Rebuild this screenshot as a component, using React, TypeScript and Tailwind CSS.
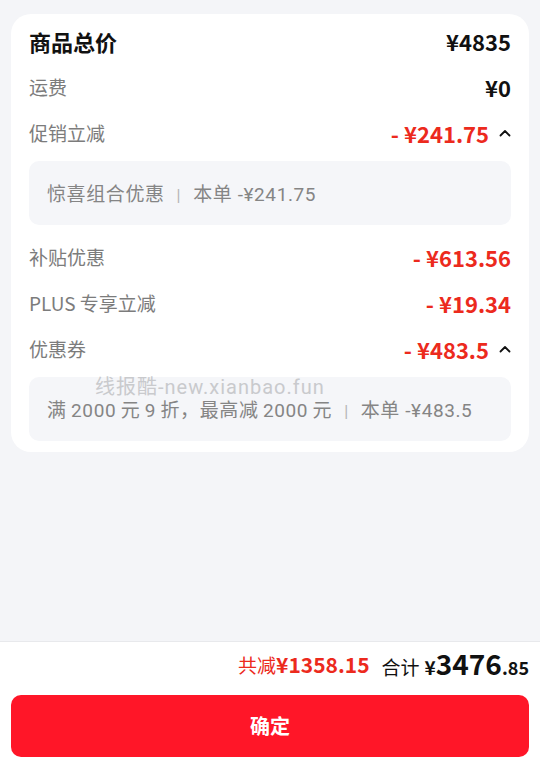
import React from 'react';

const font = { fontFamily: '"Noto Sans CJK SC", "Noto Sans", sans-serif' };
const detailFont = { fontFamily: 'Roboto, "Noto Sans CJK SC", sans-serif' };

function Chevron() {
  return (
    <svg width="12" height="8" viewBox="0 0 12 8" className="ml-[10px]">
      <polyline points="1.5,6.5 6,2 10.5,6.5" fill="none" stroke="#111" strokeWidth="1.8" strokeLinecap="round" strokeLinejoin="round" />
    </svg>
  );
}

function Row({ label, value, red, open }: { label: string; value: string; red?: boolean; open?: boolean }) {
  return (
    <div className="flex h-[46px] items-center justify-between">
      <span className="text-[19px] text-[#7c7c7c]">{label}</span>
      <span className="flex items-center">
        <span className={red ? 'text-[22px] font-bold text-[#ec2a1d]' : 'text-[22px] font-bold text-[#111]'}>{value}</span>
        {open && <Chevron />}
      </span>
    </div>
  );
}

function Detail({ children, mark }: { children: React.ReactNode; mark?: boolean }) {
  return (
    <div style={detailFont} className="relative flex h-[64px] items-center rounded-[10px] bg-[#f5f6f9] px-[18px] text-[19px] leading-none tracking-[0.6px] text-[#858585]">
      {mark && (
        <span className="absolute left-[66px] top-[0px] text-[20px] leading-none tracking-[1px] text-[#c9cacd]">线报酷-new.xianbao.fun</span>
      )}
      <span className="relative pt-[3px]">{children}</span>
    </div>
  );
}

function Sep() {
  return <span className="mx-[12px] text-[16px] text-[#b4b4b4]">|</span>;
}

export default function App() {
  return (
    <div style={font} className="flex h-[768px] w-[540px] flex-col bg-[#f4f5f8]">
      <div className="mx-[11px] mt-[14px] rounded-[20px] bg-white px-[18px] pt-[4px] pb-[11px]">
        <div className="flex h-[46px] items-center justify-between">
          <span className="text-[22px] font-bold text-[#111]">商品总价</span>
          <span className="text-[22px] font-bold text-[#111]">¥4835</span>
        </div>
        <Row label="运费" value="¥0" />
        <Row label="促销立减" value="- ¥241.75" red open />
        <div className="mt-[5px] mb-[9px]">
          <Detail>惊喜组合优惠<Sep />本单 -¥241.75</Detail>
        </div>
        <Row label="补贴优惠" value="- ¥613.56" red />
        <Row label="PLUS 专享立减" value="- ¥19.34" red />
        <Row label="优惠券" value="- ¥483.5" red open />
        <div className="mt-[5px]">
          <Detail mark>{'满\u20092000\u2009元\u20099\u2009折，最高减\u20092000\u2009元'}<Sep />本单 -¥483.5</Detail>
        </div>
      </div>

      <div className="flex-1" />

      <div className="border-t border-[#e8e9ec] bg-white px-[11px] pt-[8px] pb-[11px]">
        <div className="flex h-[30px] items-center justify-end gap-[12px]">
          <span className="flex items-baseline text-[#ec2a1d]">
            <span className="text-[19px]">共减</span>
            <span className="text-[21px] font-bold">¥1358.15</span>
          </span>
          <span className="flex items-baseline text-[#111]">
            <span className="text-[19px]">合计</span>
            <span className="ml-[5px] text-[19px] font-bold">¥</span>
            <span className="text-[28px] font-bold leading-none">3476</span>
            <span className="text-[18px] font-bold">.85</span>
          </span>
        </div>
        <button className="mt-[15px] flex h-[62px] w-full items-center justify-center rounded-[10px] bg-[#ff1628] text-[20px] font-bold text-white">
          确定
        </button>
      </div>
    </div>
  );
}
